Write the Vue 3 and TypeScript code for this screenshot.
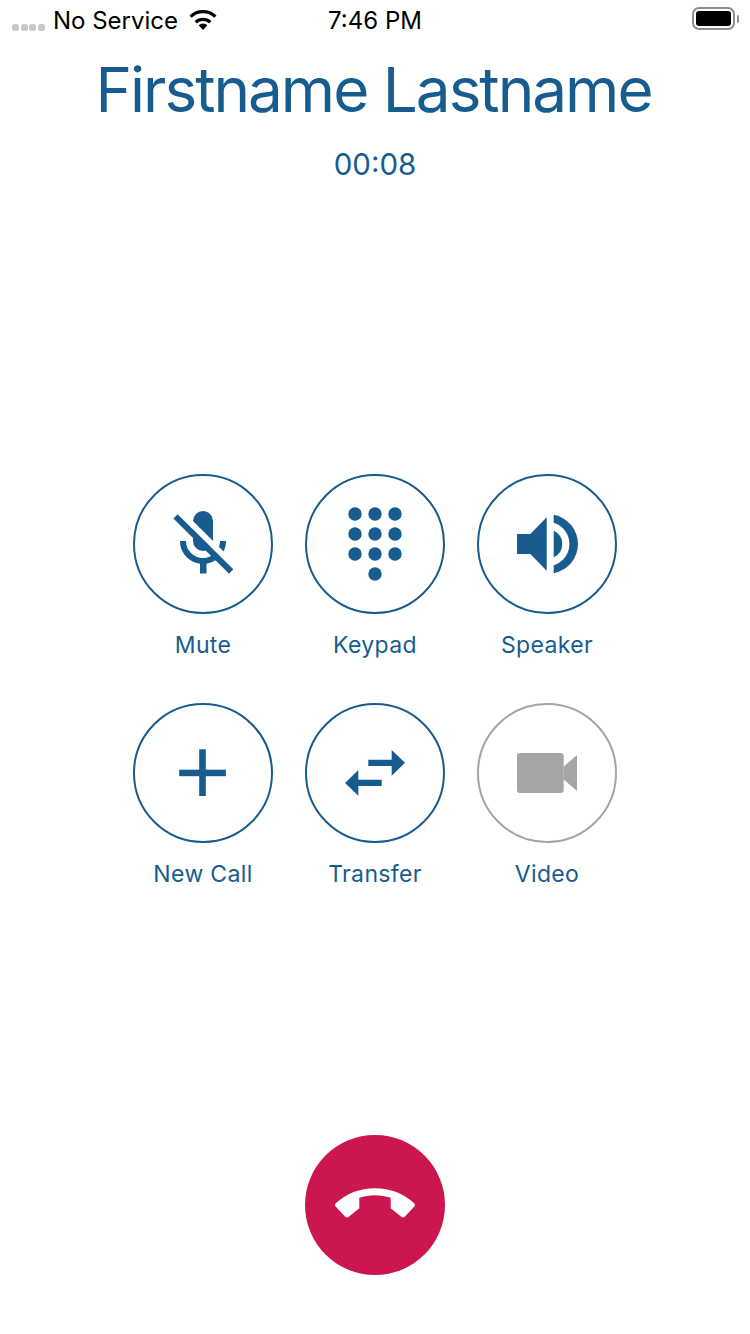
<template>
  <div class="screen">
    <!-- status bar -->
    <header class="status">
      <div class="status-left">
        <span class="signal"><i v-for="n in 4" :key="n"></i></span>
        <span class="carrier">No Service</span>
        <svg class="wifi" width="30" height="22" viewBox="0 0 30 22">
          <path d="M15 21 10.6 16.2a6.6 6.6 0 0 1 8.8 0Z" fill="#000" />
          <path d="M7.7 13.2a11 11 0 0 1 14.6 0" fill="none" stroke="#000" stroke-width="3.2" />
          <path d="M2.6 7.6a18.2 18.2 0 0 1 24.8 0" fill="none" stroke="#000" stroke-width="3.2" />
        </svg>
      </div>
      <span class="clock">7:46 PM</span>
      <div class="battery">
        <span class="battery-body"><span class="battery-fill"></span></span>
        <span class="battery-cap"></span>
      </div>
    </header>

    <h1 class="name">Firstname Lastname</h1>
    <p class="timer">00:08</p>

    <!-- call actions -->
    <section class="actions">
      <div v-for="a in actions" :key="a.label" class="action" :class="{ disabled: a.disabled }">
        <div class="circle">
          <svg width="140" height="140" viewBox="0 0 140 140">
            <g v-if="a.label === 'Mute'">
              <rect x="60" y="37" width="20" height="40" rx="10" />
              <path d="M50 67a20 20 0 0 0 40 0" fill="none" class="stroke" stroke-width="6" />
              <rect x="67" y="85" width="6.5" height="14.5" />
              <path d="M46.7 38.1 102.4 93.3" class="gap" stroke-width="6" />
              <path d="M42.5 42.3 98.2 97.5" class="stroke" stroke-width="6" />
            </g>
            <g v-else-if="a.label === 'Keypad'">
              <circle v-for="d in keypadDots" :key="d.x + '-' + d.y" :cx="d.x" :cy="d.y" r="6.7" />
            </g>
            <g v-else-if="a.label === 'Speaker'">
              <path d="M40 60H53.3L69.7 43.3V96.7L53.3 80H40Z" />
              <path d="M76.7 56.7A14.6 14.6 0 0 1 76.7 83.3Z" />
              <path d="M76.7 40.8A29.7 29.7 0 0 1 76.7 99.2V91.3A22.3 22.3 0 0 0 76.7 48.7Z" />
            </g>
            <g v-else-if="a.label === 'New Call'">
              <rect x="46.2" y="66.7" width="46.7" height="6.5" />
              <rect x="66.2" y="46.3" width="6.6" height="46.7" />
            </g>
            <g v-else-if="a.label === 'Transfer'">
              <path d="M63.3 56.7H86.7V47L100 59.8 86.7 72.7V63H63.3Z" />
              <path d="M76.7 76.7H53.3V67L40 80 53.3 92.7V83H76.7Z" />
            </g>
            <g v-else>
              <rect x="40" y="50" width="46.7" height="40" rx="3" />
              <path d="M86.7 63.5 100 52V88L86.7 76.5Z" />
            </g>
          </svg>
        </div>
        <span class="label">{{ a.label }}</span>
      </div>
    </section>

    <button class="hangup">
      <svg width="140" height="140" viewBox="0 0 140 140">
        <path
          d="M30.6 68.6C41 58.5 55 53.3 70 53.3S99 58.5 109.4 68.6Q110.6 70 109.4 71.4L99.8 81.8Q98.3 83.2 96.6 82L85.7 73.3V62.7C75.5 59.3 64.5 59.3 54.3 62.7V73.3L43.4 82Q41.7 83.2 40.2 81.8L30.6 71.4Q29.4 70 30.6 68.6Z"
          fill="#fff"
        />
      </svg>
    </button>
  </div>
</template>

<script setup lang="ts">
interface Action {
  label: string
  disabled?: boolean
}

const actions: Action[] = [
  { label: 'Mute' },
  { label: 'Keypad' },
  { label: 'Speaker' },
  { label: 'New Call' },
  { label: 'Transfer' },
  { label: 'Video', disabled: true },
]

// 3 x 3 grid plus the lone 0 key
const keypadDots = [
  ...[40, 60, 80].flatMap((y) => [50, 70, 90].map((x) => ({ x, y }))),
  { x: 70, y: 100 },
]
</script>

<style>
html,
body {
  background: #fff;
}
</style>

<style scoped>
.screen {
  width: 750px;
  height: 1334px;
  display: flex;
  flex-direction: column;
  align-items: center;
  font-family: Inter, 'Liberation Sans', sans-serif;
  color: #175c8e;
  background: #fff;
  overflow: hidden;
}

.status {
  width: 100%;
  height: 40px;
  box-sizing: border-box;
  padding: 0 11px 0 12px;
  display: flex;
  align-items: center;
  justify-content: space-between;
  color: #000;
  font-size: 24px;
  position: relative;
}

.status-left {
  display: flex;
  align-items: center;
}

.signal {
  display: flex;
  gap: 1.5px;
  margin-top: 15px;
  margin-right: 8.5px;
}

.signal i {
  width: 7px;
  height: 7px;
  border-radius: 40%;
  background: #c8c8c8;
}

.wifi {
  margin-left: 10px;
}

.clock {
  position: absolute;
  left: 0;
  right: 0;
  text-align: center;
}

.battery {
  display: flex;
  align-items: center;
  gap: 2px;
  margin-bottom: 3px;
}

.battery-body {
  width: 43px;
  height: 23px;
  box-sizing: border-box;
  padding: 2px;
  border: 2px solid #8e8e8e;
  border-radius: 7px;
  display: flex;
}

.battery-fill {
  flex: 1;
  background: #000;
  border-radius: 3px;
}

.battery-cap {
  width: 2px;
  height: 8px;
  background: #8e8e8e;
  border-radius: 0 2px 2px 0;
}

.name {
  margin: 10px 0 0 -3px;
  font-size: 62px;
  line-height: 80px;
  letter-spacing: -2px;
  font-weight: 400;
}

.timer {
  margin: 14px 0 0;
  font-size: 29.5px;
  line-height: 40px;
}

.actions {
  margin-top: 290px;
  display: grid;
  grid-template-columns: repeat(3, 140px);
  column-gap: 32px;
  row-gap: 42px;
}

.action {
  display: flex;
  flex-direction: column;
  align-items: center;
}

.circle {
  width: 140px;
  height: 140px;
  box-sizing: border-box;
  border: 2px solid #175c8e;
  border-radius: 50%;
  display: flex;
  align-items: center;
  justify-content: center;
}

.circle svg {
  flex: none;
  fill: #175c8e;
}

.stroke {
  stroke: #175c8e;
}

.gap {
  stroke: #fff;
}

.label {
  margin-top: 15px;
  font-size: 23px;
  line-height: 32px;
  letter-spacing: 0.35px;
  white-space: nowrap;
}

.action.disabled .circle {
  border-color: #a5a5a5;
}

.action.disabled .circle svg {
  fill: #a5a5a5;
}

.hangup {
  margin-top: 245px;
  width: 140px;
  height: 140px;
  padding: 0;
  border: 0;
  border-radius: 50%;
  background: #cb1650;
  display: flex;
}
</style>
